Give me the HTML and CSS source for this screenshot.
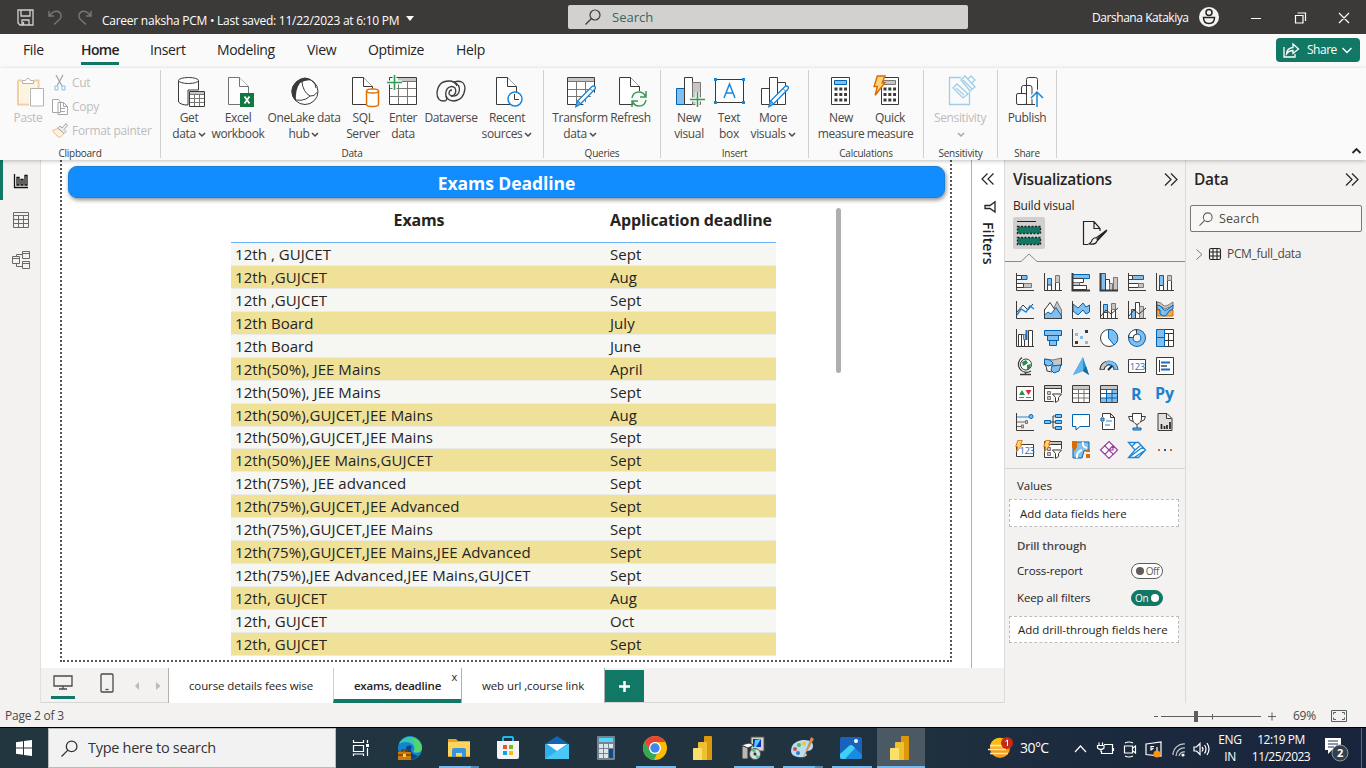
FILE: index.html
```html
<!DOCTYPE html>
<html lang="en">
<head>
<meta charset="utf-8">
<title>Career naksha PCM</title>
<link rel="stylesheet" href="styles.css">
</head>
<body>
<svg class="defs" width="0" height="0">
  <symbol id="doc" viewBox="0 0 32 32"><path class="w k" d="M6.500 1.500H17.500L26.500 10.500V28.500H6.500Z"/><path class="w k" d="M17.500 1.500V10.500H26.500"/></symbol>
  <symbol id="pencil" viewBox="0 0 32 32"><path d="M12 30.500L13.500 25L28 10.500q1.500-1.200 2.800 0q1.200 1.300 0 2.800L16.500 28Z" fill="#fff" stroke="#1a86d9" stroke-width="1.400"/><path d="M12 30.500L13.500 25q2.500.5 3 3Z" fill="#6aa9de" stroke="#1a86d9"/><path d="M26 12.500l3 3" stroke="#1a86d9"/></symbol>
  <symbol id="chev" viewBox="0 0 8 6"><path d="M1 1l3 3 3-3" fill="none" stroke="currentColor" stroke-width="1.500"/></symbol>
  <symbol id="search" viewBox="0 0 16 16"><circle cx="10" cy="6" r="5" fill="none" stroke="currentColor" stroke-width="1.200"/><path d="M6.500 9.500L.5 15.500" stroke="currentColor" stroke-width="1.200"/></symbol>
  <symbol id="pbi" viewBox="0 0 24 24"><path d="M12 1q0-1 1-1h6q1 0 1 1v23h-8z" fill="#dc980b"/><path d="M6 7q0-1 1-1h7q1 0 1 1v17H6z" fill="#efc132"/><path d="M1 13q0-1 1-1h7q1 0 1 1v11H1z" fill="#fae06a"/></symbol>
  <symbol id="funnel" viewBox="0 0 18 18"><path class="k w" d="M.5 .5H17.500V16.500H.5Z"/><path class="gf" d="M1 1H17V3H1Z"/><path class="k" d="M.5 3.500H17.500"/><path class="g" d="M3.500 6.500h3v3h-3zM3.500 11.500h3v3h-3z"/><path d="M8 8H18V18H10Z" fill="#f3f2f1"/><path class="k w" d="M8.500 9H17.500L14.500 12.500V15.500L11.500 17.500V12.500Z"/></symbol>
  <symbol id="bolt" viewBox="0 0 12 20"><path d="M4 .7h7L8.500 7H11L2 18.500 4 10.500H1Z" fill="#ffd37c" stroke="#d96b00" stroke-width="1.300"/></symbol>
</svg>

<header class="titlebar">
  <div class="quick">
    <svg width="17" height="17" viewBox="0 0 17 17" fill="none" stroke="#d2d0ce" stroke-width="1.300"><path d="M1 1H16V16H3L1 14ZM4 1V7H13V1M5 16V11H12V16M6.500 13V16"/></svg>
    <svg width="15" height="17" viewBox="0 0 15 17" fill="none" stroke="#797775" stroke-width="1.400"><path d="M1 2V7H6M1.500 6.500Q6 1 10 2.500Q15 5 12 10L6 15.500"/></svg>
    <svg width="15" height="17" viewBox="0 0 15 17" fill="none" stroke="#797775" stroke-width="1.400"><path d="M14 2V7H9M13.500 6.500Q9 1 5 2.500Q0 5 3 10L9 15.500"/></svg>
  </div>
  <div class="doc-title">Career naksha PCM • Last saved: 11/22/2023 at 6:10 PM</div>
  <i class="tri"></i>
  <div class="top-search"><svg width="16" height="16"><use href="#search"/></svg><span>Search</span></div>
  <div class="user">Darshana Katakiya</div>
  <svg class="avatar" width="20" height="20" viewBox="0 0 20 20"><circle cx="10" cy="10" r="10" fill="#f3f2f1"/><circle cx="10" cy="5.500" r="3" fill="none" stroke="#252423" stroke-width="1.500"/><path d="M4.500 10.500h11q0 6-5.500 6t-5.500-6Z" fill="none" stroke="#252423" stroke-width="1.500"/></svg>
  <svg class="winctl" width="100" height="12" viewBox="0 0 100 12" fill="none" stroke="#fff" stroke-width="1.200"><path d="M0 6.500H10M44.500 3.500H52V11H44.500ZM46.500 1H54.500V9M88 1L98 11M98 1L88 11"/></svg>
</header>

<nav class="menu">
  <a class="m1">File</a><a class="m2 on">Home</a><a class="m3">Insert</a><a class="m4">Modeling</a><a class="m5">View</a><a class="m6">Optimize</a><a class="m7">Help</a>
  <button class="share"><svg width="17" height="15" viewBox="0 0 17 15" fill="none" stroke="#fff" stroke-width="1.300"><path d="M1 4V14H12V11M3.500 11Q4 5 10 4.500V1L15.500 6 10 10.500V7.500Q6 7.500 3.500 11Z"/></svg><span>Share</span><svg width="10" height="7" viewBox="0 0 10 7"><path d="M.5 1L5 5.500 9.500 1" fill="none" stroke="#fff" stroke-width="1.300"/></svg></button>
</nav>

<section class="ribbon">
  <div class="group g-clip">
    <div class="cmds off">
      <div class="cmd c-paste"><svg width="32" height="32" viewBox="0 0 32 32" fill="none"><path d="M6 4.500H10M22 4.500H26.500V12M6 4.500V28.500H17" stroke="#f0cfa0" stroke-width="2"/><path d="M8 6H24V12H17V27H8Z" fill="#fdf3e1"/><path d="M10.500 7.500V4.500H13.500Q16 0 18.500 4.500H21.500V7.500Z" fill="#fff" stroke="#b5b3b1"/><path d="M18.500 12.500H31.500V30H18.500Z" fill="#fff" stroke="#b5b3b1"/></svg><span>Paste</span></div>
      <div class="clip-list">
        <div><svg width="16" height="16" viewBox="0 0 16 16" fill="none"><path d="M4 0L10 11M11 0L5 11" stroke="#a8a6a4" stroke-width="1.300"/><path d="M3 11h3v4h-3zM10 11h3v4h-3z" stroke="#8bbfe5"/></svg>Cut</div>
        <div><svg width="16" height="16" viewBox="0 0 16 16" fill="#fff" stroke="#a8a6a4"><path d="M.5 .5H6.500L8.500 3V13.500H.500ZM6 3.500H11.500L15.500 7.500V15.500H6ZM11.500 3.500V7.500H15.500M8.500 9.500H13M8.500 12.500H13"/></svg>Copy</div>
        <div><svg width="16" height="16" viewBox="0 0 16 16"><path d="M.5 7.500L6 5.500 12 10.500 8 14.500 5 13Z" fill="#fff0dd" stroke="#efbd93"/><path d="M6 5L8 3 10 5 14 .5 15.500 2.500 12 6.500 14 8.500 12 10.500Z" fill="#eee" stroke="#a8a6a4"/></svg>Format painter</div>
      </div>
    </div>
    <div class="glabel">Clipboard</div>
  </div>
  <div class="group g-data">
    <div class="cmds">
      <div class="cmd w42"><svg width="32" height="32" viewBox="0 0 32 32"><path class="k w" d="M5.500 4.500V26Q8 29 15 29V14H25.500V4.500"/><ellipse class="k w" cx="15.500" cy="4.500" rx="10" ry="3"/><path class="k w" d="M16.500 15.500H31.500V30.500H16.500Z"/><path class="gf" d="M17 16H31V18.500H17Z"/><path class="thin" d="M17 18.500H31M17 22.500H31M17 26.500H31M21.500 19V30M26.500 19V30"/></svg><span>Get</span><span>data<svg class="cv"><use href="#chev"/></svg></span></div>
      <div class="cmd w56"><svg width="32" height="32" viewBox="0 0 32 32"><use href="#doc" opacity=".7"/><rect x="18" y="17" width="14" height="14" fill="#10793f"/><path d="M22.500 20.500L27.500 27.500M27.500 20.500L22.500 27.500" stroke="#fff" stroke-width="1.800"/></svg><span>Excel</span><span>workbook</span></div>
      <div class="cmd w76"><svg width="32" height="32" viewBox="0 0 32 32"><circle class="k w" cx="17" cy="15.500" r="13"/><path d="M9 5Q17-2 25 5Q19 3 12 7Q7 14 8 25Q3 21 3.500 14Q4 10 9 5Z" fill="#3b3a39"/><path class="k" d="M14 6Q15 16 22 20Q26 21 29.500 16M7 24Q14 25 18 23Q21 21 22 20M24 5Q28 8 28 12"/></svg><span>OneLake data</span><span>hub<svg class="cv"><use href="#chev"/></svg></span></div>
      <div class="cmd w42"><svg width="32" height="32" viewBox="0 0 32 32"><use href="#doc" x="-1" width="32" height="32"/><path d="M19.500 15V28.500Q19.500 30.500 25.500 30.500T31.500 28.500V15" fill="#fff" stroke="#e07000" stroke-width="1.500"/><ellipse cx="25.500" cy="15" rx="6" ry="2" fill="#fff" stroke="#e07000" stroke-width="1.500"/></svg><span>SQL</span><span>Server</span></div>
      <div class="cmd w38"><svg width="32" height="32" viewBox="0 0 32 32"><path class="k w" d="M2.500 1.500H29.500V28.500H2.500Z"/><path class="gf" d="M11 2H29V5H11Z"/><path class="thin" d="M3 12.500H29M3 20.500H29M11.500 6V28M20.500 6V28M9 5.500H29"/><path d="M0 6.500H15M7.500 -1V14" stroke="#fafafa" stroke-width="4"/><path d="M0 6.500H15M7.500 -1V14" stroke="#2da04e" stroke-width="1.600"/></svg><span>Enter</span><span>data</span></div>
      <div class="cmd w58"><svg width="32" height="32" viewBox="0 0 32 32" fill="none" stroke="#3b3a39" stroke-width="1.300"><path d="M9 25Q2 25 2 17Q3 5 14 5Q20 5 22 10M9 25Q13 25 11 20Q10 15 13 12Q17 9 20 12Q22 16 19 19Q16 21 14 18Q14 14 17 14"/><path d="M19 6Q29 3 30 12Q29 24 19 25Q13 25 11 20M19 6Q26 9 24 16Q22 21 16 20"/></svg><span>Dataverse</span></div>
      <div class="cmd w54"><svg width="32" height="32" viewBox="0 0 32 32"><use href="#doc" x="-1" width="32" height="32"/><circle cx="24" cy="23" r="7" fill="#fff" stroke="#1a86d9" stroke-width="1.500"/><path class="k" d="M23.500 18V23.500H28"/></svg><span>Recent</span><span>sources<svg class="cv"><use href="#chev"/></svg></span></div>
    </div>
    <div class="glabel">Data</div>
  </div>
  <div class="group g-q">
    <div class="cmds">
      <div class="cmd w56"><svg width="32" height="32" viewBox="0 0 32 32"><path class="k w" d="M3.500 1.500H30.500V28.500H3.500Z"/><path class="gf" d="M4 2H30V5H4Z"/><path class="thin" d="M4 5.500H30M4 13.500H30M4 20.500H30M12.500 6V28M21.500 6V28"/><path d="M17 31L33 14V31Z" fill="#fafafa"/><use href="#pencil" width="32" height="32"/></svg><span>Transform</span><span>data<svg class="cv"><use href="#chev"/></svg></span></div>
      <div class="cmd w45"><svg width="32" height="32" viewBox="0 0 32 32"><use href="#doc" x="-2" width="32" height="32"/><circle cx="24" cy="23" r="8" fill="#fafafa"/><path d="M17 22Q18 16 24 16Q29 16 30.500 21M31 15V21H25M31 24Q30 30 24 30Q19 30 17.500 25M17 31V25H23" fill="none" stroke="#399b56" stroke-width="1.500"/></svg><span>Refresh</span></div>
    </div>
    <div class="glabel">Queries</div>
  </div>
  <div class="group g-ins">
    <div class="cmds">
      <div class="cmd w40"><svg width="32" height="32" viewBox="0 0 32 32"><path class="b" d="M3.500 12.500H11.500V28.500H3.500Z"/><path class="k w" d="M11.500 1.500H19.500V28.500H11.500Z"/><path class="g" d="M19.500 6.500H27.500V28.500H19.500Z"/><path d="M16 23.500H32M24.500 16V31" stroke="#fafafa" stroke-width="4"/><path d="M17 23.500H32M24.500 16V31" stroke="#2da04e" stroke-width="1.500"/></svg><span>New</span><span>visual</span></div>
      <div class="cmd w40"><svg width="32" height="32" viewBox="0 0 32 32"><path class="k w" d="M2.500 3.500H30.500V26.500H2.500Z"/><path d="M1 2h3v3h-3zM29 2h3v3h-3zM1 25h3v3h-3zM29 25h3v3h-3z" fill="#1a86d9"/><path d="M11 22L16.500 8 22 22M13 17H20" fill="none" stroke="#1a86d9" stroke-width="1.500"/></svg><span>Text</span><span>box</span></div>
      <div class="cmd w48"><svg width="32" height="32" viewBox="0 0 32 32"><path class="k w" d="M4.500 12.500H12.500V28.500H4.500ZM12.500 1.500H20.500V28.500H12.500ZM20.500 6.500H28.500V28.500H20.500Z"/><use href="#pencil" width="32" height="32"/></svg><span>More</span><span>visuals<svg class="cv"><use href="#chev"/></svg></span></div>
    </div>
    <div class="glabel">Insert</div>
  </div>
  <div class="group g-calc">
    <div class="cmds">
      <div class="cmd w48"><svg width="32" height="32" viewBox="0 0 32 32"><path class="k w" d="M6.500 1.500H24.500V28.500H6.500Z"/><path class="b" d="M9.500 4.500H21.500V8.500H9.500Z"/><path d="M9.500 13H22M9.500 18.500H22M9.500 24H22" stroke="#3b3a39" stroke-width="3" stroke-dasharray="3 1.800"/></svg><span>New</span><span>measure</span></div>
      <div class="cmd w50"><svg width="32" height="32" viewBox="0 0 32 32"><path class="k w" d="M7.500 1.500H24.500V28.500H7.500Z"/><path class="g" d="M9.500 4.500H21.500V8.500H9.500Z"/><path d="M9.500 13H22M9.500 18.500H22M9.500 24H22" stroke="#3b3a39" stroke-width="3" stroke-dasharray="3 1.800"/><use href="#bolt" x="-1" y="-1" width="13" height="22"/></svg><span>Quick</span><span>measure</span></div>
    </div>
    <div class="glabel">Calculations</div>
  </div>
  <div class="group g-sens">
    <div class="cmds off">
      <div class="cmd w54"><svg width="32" height="32" viewBox="0 0 32 32" fill="none" stroke="#9fcdea" stroke-width="1.300"><path d="M17 1.500H5.500V28.500H25.500V16"/><path d="M9 12L13 8 24 18 19 22ZM12 12L20 19M17 4L21 0 31 11 26 15ZM19 4L28 13M24 3L27 0 31 4 28 7"/></svg><span>Sensitivity</span><span><svg class="cv"><use href="#chev"/></svg></span></div>
    </div>
    <div class="glabel">Sensitivity</div>
  </div>
  <div class="group g-share">
    <div class="cmds">
      <div class="cmd w54"><svg width="32" height="32" viewBox="0 0 32 32"><path class="k w" d="M15.500 28.500V3.500Q15.500 1.500 17.500 1.500H24.500Q26.500 1.500 26.500 3.500V28.500ZM10.500 28.500V12Q10.500 9.500 12.500 9.500H19Q21 9.500 21 12V28.500Z"/><rect class="k w" x="5.500" y="17.500" width="10" height="11" rx="1.500"/><path d="M20 22L26 16 32 22M26 16V31" fill="none" stroke="#fafafa" stroke-width="4"/><path d="M20 22L26 16 32 22M26 16V31" fill="none" stroke="#1a86d9" stroke-width="1.500"/></svg><span>Publish</span></div>
    </div>
    <div class="glabel">Share</div>
  </div>
  <svg class="collapse" width="9" height="6" viewBox="0 0 9 6"><path d="M.5 5L4.500 1 8.500 5" fill="none" stroke="#252423" stroke-width="1.800"/></svg>
</section>

<main>
  <aside class="rail">
    <div class="rail-item sel"><svg width="16" height="16" viewBox="0 0 16 16" fill="none" stroke="#111" stroke-width="1.300"><path d="M1.500 1V14.500H15M4 4.500H6V12H4ZM8 6.500H10V12H8ZM12 2.500H14V12H12Z"/></svg></div>
    <div class="rail-item"><svg width="16" height="16" viewBox="0 0 16 16" fill="none" stroke="#6b6967"><path d="M.5 .5H15.500V15.500H.500ZM.5 3.500H15.500M.5 7.500H15.500M.5 11.500H15.500M5.500 3.500V15M10.500 3.500V15"/></svg></div>
    <div class="rail-item"><svg width="18" height="18" viewBox="0 0 18 18" fill="none" stroke="#6b6967"><path d="M.5 5.500H7.500V12.500H.500ZM.5 7.500H7.500M10.500 .5H17.500V7.500H10.500ZM10.500 2.500H17.500M10.500 10.500H17.500V17.500H10.500ZM10.500 12.500H17.500M4.500 5.500V3.500H10.500M4.500 12.500V15.500H10.500"/></svg></div>
  </aside>
  <section class="work">
    <div class="canvas-row">
      <div class="canvas">
        <div class="page">
          <h1>Exams Deadline</h1>
          <div class="table-wrap">
            <table>
              <thead><tr><th class="c1">Exams</th><th>Application deadline</th></tr></thead>
              <tbody>
                <tr><td>12th , GUJCET</td><td>Sept</td></tr>
                <tr><td>12th ,GUJCET</td><td>Aug</td></tr>
                <tr><td>12th ,GUJCET</td><td>Sept</td></tr>
                <tr><td>12th Board</td><td>July</td></tr>
                <tr><td>12th Board</td><td>June</td></tr>
                <tr><td>12th(50%), JEE Mains</td><td>April</td></tr>
                <tr><td>12th(50%), JEE Mains</td><td>Sept</td></tr>
                <tr><td>12th(50%),GUJCET,JEE Mains</td><td>Aug</td></tr>
                <tr><td>12th(50%),GUJCET,JEE Mains</td><td>Sept</td></tr>
                <tr><td>12th(50%),JEE Mains,GUJCET</td><td>Sept</td></tr>
                <tr><td>12th(75%), JEE advanced</td><td>Sept</td></tr>
                <tr><td>12th(75%),GUJCET,JEE Advanced</td><td>Sept</td></tr>
                <tr><td>12th(75%),GUJCET,JEE Mains</td><td>Sept</td></tr>
                <tr><td>12th(75%),GUJCET,JEE Mains,JEE Advanced</td><td>Sept</td></tr>
                <tr><td>12th(75%),JEE Advanced,JEE Mains,GUJCET</td><td>Sept</td></tr>
                <tr><td>12th, GUJCET</td><td>Aug</td></tr>
                <tr><td>12th, GUJCET</td><td>Oct</td></tr>
                <tr><td>12th, GUJCET</td><td>Sept</td></tr>
              </tbody>
            </table>
            <div class="scroll"></div>
          </div>
        </div>
      </div>
      <aside class="filters">
        <svg width="14" height="12" viewBox="0 0 14 12" fill="none" stroke="#252423" stroke-width="1.200"><path d="M6.500 .5L1 6l5.500 5.500M12.500 .5L7 6l5.500 5.500"/></svg>
        <svg class="fun" width="12" height="12" viewBox="0 0 12 12" fill="none" stroke="#252423" stroke-width="1.300"><path d="M11 .8V11L6 7.500H1V4.500H6Z"/></svg>
        <span>Filters</span>
      </aside>
    </div>
    <div class="tabs">
      <div class="views">
        <div class="view on"><svg width="20" height="15" viewBox="0 0 20 15" fill="none" stroke="#4b4947" stroke-width="1.300"><path d="M1 1H19V11H1ZM10 11V14M6 14H14"/></svg></div>
        <div class="view ph"><svg width="14" height="20" viewBox="0 0 14 20" fill="none" stroke="#4b4947" stroke-width="1.300"><rect x="1" y="1" width="12" height="18" rx="1"/><path d="M5.500 16.500H8.500"/></svg></div>
        <svg class="arrows" width="28" height="8" viewBox="0 0 28 8" fill="#bdbbb9"><path d="M5 0V8L1 4ZM22 0V8L26.500 4Z"/></svg>
      </div>
      <div class="tab t1">course details fees wise</div>
      <div class="tab t2">exams, deadline<i>x</i></div>
      <div class="tab t3">web url ,course link</div>
      <div class="add"><svg width="11" height="11" viewBox="0 0 11 11"><path d="M0 5.500H11M5.500 0V11" stroke="#fff" stroke-width="2.500"/></svg></div>
    </div>
  </section>

  <aside class="viz">
    <div class="phead"><h2>Visualizations</h2><svg width="14" height="13" viewBox="0 0 14 13" fill="none" stroke="#252423" stroke-width="1.200"><path d="M1 .5L7 6.500 1 12.500M7 .5L13 6.500 7 12.500"/></svg></div>
    <div class="bv">Build visual</div>
    <div class="modes">
      <div class="mode on"><svg width="26" height="26" viewBox="0 0 26 26"><path d="M1 1.500H20" stroke="#252423"/><path d="M1.500 6.500H24.500V13.500H1.500ZM1.500 17.500H24.500V24.500H1.500Z" fill="#117865" stroke="#252423" stroke-dasharray="2 1.500" stroke-width="1.400"/></svg></div>
      <svg class="brush" width="26" height="26" viewBox="0 0 26 26" fill="none" stroke="#252423" stroke-width="1.200"><path d="M6 24.500H1.500V1.500H12L18 8.500V11M12 1.500V8.500H18M25 10L15 21Q14 25 7 24Q10 22 10 20Q12 17 14 18L25 10Z"/><path d="M24 11L15 20" stroke-width="2"/></svg>
    </div>
    <svg class="notch" width="180" height="9" viewBox="0 0 180 9"><path d="M0 8.500H16L24 1 32 8.500H180" fill="none" stroke="#8a8886"/></svg>
    <div class="icons">
      <svg viewBox="0 0 18 18"><path class="b" d="M5 2.500h6v4H5z"/><path class="k w" d="M.5 2.500h5v4h-5z"/><path class="g" d="M7.500 10.500H15.500V14.500H7.500Z"/><path class="k w" d="M.5 10.500h7v4h-7z"/><path class="k" d="M.5 0V17.500H18"/></svg>
      <svg viewBox="0 0 18 18"><path class="b" d="M3.500 5.500h4v7h-4z"/><path class="k w" d="M3.500 12h4v5.500h-4zM11.500 9.500h4v8h-4z"/><path class="g" d="M11.500 2.500h4v7h-4z"/><path class="k" d="M.5 0V17.500H18"/></svg>
      <svg viewBox="0 0 18 18"><path class="b" d="M.5 1.500h17v4H.5z"/><path class="k w" d="M.5 5.500h11v4H.5z"/><path class="g" d="M.5 9.500h7v3H.5z"/><path class="k w" d="M.5 12.500h14v4H.5z"/><path class="k" stroke-width="2" d="M.5 0V17.500H18"/></svg>
      <svg viewBox="0 0 18 18"><path class="b" d="M.5 .5h5v17h-5z"/><path class="k w" d="M5.500 6.500h4v11h-4z"/><path class="g" d="M9.500 10.500h3v7h-3zM13.500 4.500h4v13h-4z"/><path class="k" stroke-width="2" d="M.5 0V17.500H18"/></svg>
      <svg viewBox="0 0 18 18"><path class="b" d="M4.500 2.500h11v4h-11z"/><path class="k w" d="M.5 2.500h4v4h-4zM.5 10.500h10v4h-10z"/><path class="g" d="M10.500 10.500h5v4h-5z"/><path class="k" d="M.5 0V17.500H18"/></svg>
      <svg viewBox="0 0 18 18"><path class="b" d="M3.500 2.500h4v10h-4z"/><path class="k w" d="M3.500 12.500h4v5h-4zM11.500 7.500h4v10h-4z"/><path class="g" d="M11.500 2.500h4v5h-4z"/><path class="k" d="M.5 0V17.500H18"/></svg>

      <svg viewBox="0 0 18 18"><path class="k" d="M.5 0V17.500H18M1 11L7 4 12 9 17 3"/><path d="M1 14L5 8 10 11 14 5 18 8" fill="none" stroke="#1a86d9" stroke-width="1.400"/></svg>
      <svg viewBox="0 0 18 18"><path class="g" d="M9 9L13 .5 17.500 9V17H9Z"/><path class="k w" d="M.5 17V9L6 1.500 13 12"/><path class="b" d="M.5 17.500V14L4 11 7 13 12 6.500 17.500 15V17.500Z"/><path class="k" d="M.5 8V17.500H18"/></svg>
      <svg viewBox="0 0 18 18"><path class="b" d="M1 3L6 7 11 2 14 6 17.500 4V11L14 13 11 9 6 14 1 10Z"/><path class="k" d="M.5 0V17.500H18"/></svg>
      <svg viewBox="0 0 18 18"><path class="b" d="M3.500 3.500h4v10h-4z"/><path class="k w" d="M3.500 11.500h4v6h-4zM11.500 8.500h4v9h-4z"/><path class="g" d="M11.500 2.500h4v6h-4z"/><path class="k" d="M.5 0V17.500H18M1 15L6 9 11 13 18 7"/></svg>
      <svg viewBox="0 0 18 18"><path class="b" d="M3.500 8.500h4v9h-4z"/><path class="k w" d="M7.500 1.500h4v16h-4z"/><path class="g" d="M11.500 5.500h4v12h-4z"/><path class="k" d="M.5 0V17.500H18M1 15L6 9 11 13 18 7"/></svg>
      <svg viewBox="0 0 18 18"><path class="g" d="M1 1Q5 1 7 4T17 1V5Q13 6 9 8Q5 5 1 5Z"/><path d="M1 9h4l3 4 4-4h5v6H1z" fill="#f2a451" stroke="#e07000"/><path class="b" d="M1 4Q5 4 7 8T17 4V8Q13 9 11 13T4 13V9L1 8Z"/><path class="k" d="M.5 0V17.500H18"/></svg>

      <svg viewBox="0 0 18 18"><path class="k w" d="M2.500 5.500h3v12h-3zM5.500 5.500h3v12h-3zM12.500 1.500h4v16h-4z"/><path class="g" d="M7.500 5.500h2v5h-2z"/><path d="M10.500 1v10" stroke="#1a6fc0" stroke-width="2"/><path class="k" d="M.5 0V17.500H18"/></svg>
      <svg viewBox="0 0 18 18"><path class="b" d="M.5 1.500h17v5H.5zM3.500 6.500h11v5h-11zM5.500 11.500h7v5h-7z"/></svg>
      <svg viewBox="0 0 18 18"><path class="k" d="M.5 0V17.500H18"/><path d="M13 1h3v3h-3zM3 12h3v3H3z" fill="#3b3a39"/><path d="M3 4h3v3H3zM8 7h3v3H8zM13 12h3v3h-3z" fill="#83beec"/></svg>
      <svg viewBox="0 0 18 18"><circle class="k w" cx="9" cy="9" r="8.500"/><path class="b" d="M8.500 .5A8.500 8.500 0 0 1 14 16L8.500 9Z"/></svg>
      <svg viewBox="0 0 18 18"><circle cx="9" cy="9" r="6.200" fill="none" stroke="#0063b1" stroke-width="5.600"/><circle cx="9" cy="9" r="6.200" fill="none" stroke="#83beec" stroke-width="3.600"/><path d="M2.800 9A6.200 6.200 0 0 1 9 2.800" fill="none" stroke="#3b3a39" stroke-width="5.600"/><path d="M2.900 8A6.200 6.200 0 0 1 8 2.900" fill="none" stroke="#fff" stroke-width="3.600"/></svg>
      <svg viewBox="0 0 18 18"><path class="k w" d="M8.500 .5h9v17h-9zM8.500 4.500h9M12.500 5v12M8.500 11.500h9"/><path class="b" d="M.5 .5h8v8h-8zM.5 8.500h8v9h-8z"/></svg>

      <svg viewBox="0 0 18 18"><circle class="k w" cx="10" cy="7.500" r="5.500"/><path d="M6 5l4-2 2 3-3 2-2 1zM11 8l4-1-1 4-3 2z" fill="#2b8d48"/><path class="k" stroke-width="1.300" d="M6 .5A8 8 0 1 0 15 14M9.500 15V17.500M4 17.500H15"/></svg>
      <svg viewBox="0 0 18 18"><path class="g" d="M.5 2L9 3 17.500 1V8L12 10 9 8 1 8Z"/><path class="b" d="M.5 2L6 3 9 6 8 8 4 9 .5 7ZM8 9L17 8 15 14 10 16 7 13Z"/><path class="k" d="M.5 7Q3 10 3 14L8 15M17.500 1V8L16 9"/></svg>
      <svg viewBox="0 0 18 18"><path d="M11 0L17 18 11 14 1 18Z" fill="#2490d7"/><path d="M11 0V14L1 18Z" fill="#64b5e9"/><path d="M11 14L17 18 14 9Z" fill="#156b9f"/></svg>
      <svg viewBox="0 0 18 18"><path d="M2 13A7 7 0 0 1 16 13" fill="none" stroke="#0063b1" stroke-width="5"/><path d="M2 12.500A7 7 0 0 1 16 12.500" fill="none" stroke="#83beec" stroke-width="3"/><path d="M2 12.500A7 7 0 0 1 6.500 6.500" fill="none" stroke="#3b3a39" stroke-width="5"/><path d="M2 12A7 7 0 0 1 6.500 6.500" fill="none" stroke="#c8c6c4" stroke-width="3"/><path d="M8 13l4-4" stroke="#252423" stroke-width="2"/></svg>
      <svg viewBox="0 0 18 18"><path class="k w" d="M.5 2.500h17v13H.5z"/><text x="1.800" y="12.700" class="num">123</text></svg>
      <svg viewBox="0 0 18 18"><path class="k w" d="M.5 .5h17v17H.5z"/><path d="M3.500 3v12" class="k"/><path d="M5 5.500h9M5 12.500h9" stroke="#1a6fc0" stroke-width="2"/><path d="M5 9h6" stroke="#444" stroke-width="1.500"/></svg>

      <svg viewBox="0 0 18 18"><path class="k w" d="M.5 1.500h17v14H.5z"/><path d="M3 10l3-5 3 5z" fill="#2b9348"/><path d="M9.500 5h6l-3 5z" fill="#d13438"/><path d="M3 12.500h5M10 12.500h5" stroke="#777"/></svg>
      <svg viewBox="0 0 18 18"><use href="#funnel"/></svg>
      <svg viewBox="0 0 18 18"><path class="k w" d="M.5 .5h17v17H.5z"/><path class="gf" d="M1 1H17V4H1Z"/><path class="thin" d="M1 4.500H17M1 8.500H17M1 13H17M6.500 5V17M12 5V17"/></svg>
      <svg viewBox="0 0 18 18"><path class="k w" d="M.5 .5h17v17H.5z"/><path class="gf" d="M1 1H17V4H1Z"/><path d="M12 5h5v12H1v-4h11zM6 9h6v4H6z" fill="#83beec"/><path d="M1 4.500H17M1 8.500H17M1 13H17M6.500 5V17M12 5V17" stroke="#0063b1"/></svg>
      <svg viewBox="0 0 18 18"><text x="3" y="15" class="rr">R</text></svg>
      <svg viewBox="0 0 18 18"><text x="-1" y="14" class="rr">Py</text></svg>

      <svg viewBox="0 0 18 18"><path class="k" d="M.5 0V17.500H18"/><path d="M1 9h8M1 13.500h4" stroke="#666"/><path d="M1 4h12" stroke="#1a86d9"/><circle cx="15" cy="3.500" r="2" class="b"/><path class="g" d="M9.500 7.500h2v3h-2zM5.500 12h2v3h-2z"/></svg>
      <svg viewBox="0 0 18 18"><path class="k" d="M6 9h6M9 9V3h3M9 9v6h3"/><path class="b" d="M.5 7.500h6v3h-6zM11.500 1.500h6v3h-6zM11.500 7.500h6v3h-6zM11.500 13.500h6v3h-6z"/></svg>
      <svg viewBox="0 0 18 18"><path d="M.5 1.500h17v12H8L4 17V13.500H.5z" fill="#fff" stroke="#0063b1"/></svg>
      <svg viewBox="0 0 18 18"><path class="k w" d="M2.500 4V.5h8l4 4V16.500H2.500V9M10.500 .5v4h4"/><path class="b" d="M1 5h3v3H1z"/><path d="M6 8h6M5 12h5" stroke="#1a86d9"/></svg>
      <svg viewBox="0 0 18 18"><path class="k w" d="M4.500 .5h9V5q0 5-4.500 6.500Q4.500 10 4.500 5zM4.500 3.500H.5Q1 8 5 8.500M13.500 3.500h4Q17 8 13 8.500M9 12v3"/><path class="b" d="M5 15h8v2H5z"/></svg>
      <svg viewBox="0 0 18 18"><path stroke="#3b3a39" fill="#e1dfdd" d="M2 .5h9l5 5V17.500H2zM10.500 .5v5h5"/><path d="M5.500 11v5M8.500 13v3M11 12v4M14 9v7" stroke="#252423" stroke-width="1.700"/></svg>

      <svg viewBox="0 0 18 18"><path class="k w" d="M.5 3.500h17v12H.5z"/><text x="3.500" y="13" class="num">123</text><use href="#bolt" x="-1" y="-1" width="8" height="13"/></svg>
      <svg viewBox="0 0 18 18"><use href="#funnel"/><use href="#bolt" x="-1" y="-1" width="8" height="13"/></svg>
      <svg viewBox="0 0 18 18"><path class="b" d="M1 1H17V9L12 10 10 17H1Z"/><path d="M11 1q-1 5 4 6M5 17q-1-6 5-8" fill="none" stroke="#fff" stroke-width="2"/><path d="M0 0h5v6l-2.500 4L0 6zM14 13h4v4h-4zM14 9h4v2h-4z" fill="#d96b00"/></svg>
      <svg viewBox="0 0 18 18" fill="#fff" stroke="#9b3d9f" stroke-width="1.200"><path d="M9 .5L13 4.500V9H9L4.700 4.700ZM4.700 4.700L.5 9 5 13.300 9 9ZM13 4.500L17.500 9 13.300 13.300 9 9ZM5 13.300L9 17.500 13.300 13.300 9 9Z"/></svg>
      <svg viewBox="0 0 18 18" fill="#fff" stroke="#1a86d9" stroke-width="1.300"><path d="M.5 1.500h10L17.500 9l-7 7.500H.5L7 9ZM4 5L8 1.500M7 9l6-5M2 15.500L15 6M7 16L16 10"/></svg>
      <svg viewBox="0 0 18 18"><path d="M2 8h2v2H2z" fill="#d96b00"/><path d="M8 8h2v2H8z" fill="#2b579a"/><path d="M14 8h2v2h-2z" fill="#d96b00"/></svg>
    </div>
    <div class="fields">
      <div class="lbl">Values</div>
      <div class="drop">Add data fields here</div>
      <div class="lbl bold">Drill through</div>
      <div class="row"><span>Cross-report</span><div class="tog"><b></b><span>Off</span></div></div>
      <div class="row r2"><span>Keep all filters</span><div class="tog on"><span>On</span><b></b></div></div>
      <div class="drop d2">Add drill-through fields here</div>
    </div>
  </aside>

  <aside class="data">
    <div class="phead"><h2>Data</h2><svg width="14" height="13" viewBox="0 0 14 13" fill="none" stroke="#252423" stroke-width="1.200"><path d="M1 .5L7 6.500 1 12.500M7 .5L13 6.500 7 12.500"/></svg></div>
    <div class="dsearch"><svg width="14" height="14"><use href="#search"/></svg><span>Search</span></div>
    <div class="tree"><svg width="7" height="11" viewBox="0 0 7 11" fill="none" stroke="#797775"><path d="M.5 .5L6 5.500 .5 10.500"/></svg><svg class="tb" width="12" height="12" viewBox="0 0 12 12" fill="none" stroke="#252423" stroke-width="1.100"><rect x=".5" y=".5" width="11" height="11" rx="1.500"/><path d="M.5 4H11.500M.5 8H11.500M4 .5V11.500M8 .5V11.500"/></svg><span>PCM_full_data</span></div>
  </aside>
</main>

<footer class="status">
  <span>Page 2 of 3</span>
  <div class="zoom"><svg width="122" height="12" viewBox="0 0 122 12"><path d="M0 6.500H4M7 6.500H107M58.500 4V9.500M114 6.500H122M118 2.500V10.500" stroke="#605e5c"/><path d="M40 1H44V12H40Z" fill="#605e5c"/></svg><span>69%</span><svg width="16" height="12" viewBox="0 0 16 12" fill="none" stroke="#4b6b55"><path d="M.5 .5H15.500V11.500H.5Z" stroke="#605e5c"/><path d="M2.500 4.500V2.500H5M11 2.500H13.500V4.500M13.500 7.500V9.500H11M5 9.500H2.500V7.500"/></svg></div>
</footer>

<footer class="taskbar">
  <div class="start"><svg width="16" height="16" viewBox="0 0 16 16" fill="#fff"><path d="M0 2.200L7 1.200V7.500H0ZM8 1L16 0V7.500H8ZM0 8.500H7V14.800L0 13.800ZM8 8.500H16V16L8 15Z"/></svg></div>
  <div class="tsearch"><svg width="17" height="17"><use href="#search"/></svg><span>Type here to search</span></div>
  <div class="apps">
  <div class="app"><svg width="16" height="16" viewBox="0 0 16 16" fill="none" stroke="#fff" stroke-width="1.200"><path d="M.5 0V2.500H10.500V0M.5 5.500H10.500V11.500H.5ZM.5 16V14H10.500V16M14.500 0V3M14.500 8V16"/><path d="M13 4h3v3h-3z" fill="#fff" stroke="none"/></svg></div>
  <div class="app"><svg class="lg" viewBox="0 0 24 24"><circle cx="12" cy="12" r="12" fill="#1484cf"/><path d="M1 8A12 12 0 0 1 24 12Q23 18 15 16Q18 12 14 8Q8 4 1 8Z" fill="#36c6b4"/><path d="M13 1Q24 3 24 13Q22 18 16 16Q19 8 13 1Z" fill="#55d468"/><path d="M8 13Q8 8 14 10Q10 17 20 20Q15 25 10 23Q6 18 8 13Z" fill="#0d4488"/><path d="M0 16H13V24H0Z" fill="#cd7a09"/><path d="M4 16V14H9V16M0 19H13" fill="none" stroke="#754007" stroke-width="1.500"/><path d="M5 18h3v3H5z" fill="#ffd34a"/></svg></div>
  <div class="app run half"><svg class="lg" viewBox="0 0 24 24"><path d="M1 3H9L11 5H23V21H1Z" fill="#e7a51a"/><path d="M1 6H23V20H1Z" fill="#ffd35c"/><path d="M5 21V14Q5 12 7 12H17Q19 12 19 14V21H15V17H9V21Z" fill="#3596dd"/></svg></div>
  <div class="app"><svg class="lg" viewBox="0 0 24 24"><path d="M7 7V2Q7 1 8 1H16Q17 1 17 2V7" fill="none" stroke="#21b8e8" stroke-width="2"/><path d="M1 5H23V21Q23 23 21 23H3Q1 23 1 21Z" fill="#f2f4f7"/><path d="M7 9h4v4H7z" fill="#f35325"/><path d="M13 9h4v4h-4z" fill="#81bc06"/><path d="M7 15h4v4H7z" fill="#05a6f0"/><path d="M13 15h4v4h-4z" fill="#ffba08"/></svg></div>
  <div class="app"><svg class="lg" viewBox="0 0 24 24"><path d="M0 8L12 0 24 8V22H0Z" fill="#1266b4"/><path d="M0 8L24 8V23H0Z" fill="#2dafed"/><path d="M2 8H22L12 15Z" fill="#fff"/><path d="M0 23L12 15 24 8V23Z" fill="#49c7f5"/></svg></div>
  <div class="app"><svg class="lg" viewBox="0 0 24 24"><rect x="3" width="18" height="24" rx="1" fill="#768393"/><path d="M5 2H19V6H5Z" fill="#4fd8fa"/><path d="M5 8h4v4H5zM10 8h4v4h-4zM15 8h4v4h-4zM5 13h4v4H5zM10 13h4v4h-4zM5 18h4v4H5zM10 18h4v4h-4z" fill="#dce4ec"/><path d="M15 13h4v9h-4z" fill="#0d4a86"/></svg></div>
  <div class="app run"><svg class="lg" viewBox="0 0 24 24"><circle cx="12" cy="12" r="12" fill="#fbbc05"/><path d="M1.600 6A12 12 0 0 1 22.400 6H12A6 6 0 0 0 7 9L6.800 15Z" fill="#ea4335"/><path d="M1.600 6L7 15A6 6 0 0 0 12 18L14 17.500 11 24A12 12 0 0 1 1.600 6Z" fill="#34a853"/><circle cx="12" cy="12" r="6" fill="#fff"/><circle cx="12" cy="12" r="4.700" fill="#4285f4"/></svg></div>
  <div class="app"><svg class="lg"><use href="#pbi"/></svg></div>
  <div class="app run"><svg class="lg" viewBox="0 0 24 24"><path d="M10 1H23V15H10Z" fill="#d5d3c5" stroke="#555"/><path d="M12 3H20V11H12Z" fill="#0b2bd0"/><path d="M14 4L20 3 15 11H13Z" fill="#46d7f0"/><path d="M1 10H7V23H1Z" fill="#b8b8b8" stroke="#333"/><path d="M0 9L8 7 13 9 7 12Z" fill="#fff" stroke="#333"/><circle cx="14" cy="18" r="5.500" fill="#ddd" stroke="#555"/><path d="M14 18L10 14Q13 12 15 13ZM14 18l5 3-3 2z" fill="#55c58e"/><circle cx="14" cy="18" r="1.500" fill="#333"/></svg></div>
  <div class="app run half"><svg class="lg" viewBox="0 0 24 24"><path d="M1 15Q1 6 12 4Q24 3 23 11Q22 15 17 15Q15 17 17 19Q15 22 8 21Q1 20 1 15Z" fill="#b8dcf2"/><circle cx="5" cy="13" r="2" fill="#df4a42"/><circle cx="9" cy="9" r="2" fill="#57b84c"/><circle cx="14" cy="7.500" r="2" fill="#f5c43b"/><circle cx="8" cy="17" r="2" fill="#2f7fc7"/><path d="M12 24L18 9 21 1 24 3 20 10Z" fill="#d78b48"/></svg></div>
  <div class="app run"><svg class="lg" viewBox="0 0 24 24"><rect x="1" y="1" width="22" height="22" rx="2" fill="#1763bd"/><path d="M1 19L10 10Q12 8 14 10L23 19V21Q23 23 21 23H3Q1 23 1 21Z" fill="#1a8cdf"/><path d="M1 18L10 10Q12 8 14 10L16 12 6 23H3Q1 23 1 21Z" fill="#42cff5"/><circle cx="17" cy="5" r="2" fill="#fff"/></svg></div>
  <div class="app run act"><svg class="lg"><use href="#pbi"/></svg></div>
  </div>
  <div class="weather"><svg width="26" height="22" viewBox="0 0 26 22"><circle cx="12" cy="11" r="10" fill="#f99b16"/><path d="M3 6A10 10 0 0 1 18 3L16 11H2Z" fill="#fdba13"/><path d="M2 8.500H15M0 12.500H18M2 16.500H20" stroke="#f9e6c0" stroke-width="1.500"/><circle cx="19" cy="6" r="6" fill="#c42b1c"/><path d="M17.500 4.500L19.500 3V9" fill="none" stroke="#fff"/></svg><span>30°C</span></div>
  <svg class="tray" width="134" height="18" viewBox="0 0 134 18" fill="none" stroke="#fff" stroke-width="1.200"><path d="M0 12L5.500 6 11 12M29 4.500H37.500V13.500H26.500V11M38.500 8V11M24 2.500V5M27.500 2.500V5M22.500 5.500H29V8Q26 11 22.500 8ZM26 10V12M49.500 6H57.500V13H49.500ZM58 8L60.500 6V13L58 11M50 3Q54 1 58 3M50 16Q54 18 58 16M71 4L86 2V16L71 14.500ZM79 6.500H76V10.500M76 10L78.500 8M80 11.500H82V7"/><circle cx="82" cy="14" r="3.500" fill="#ff9500" stroke="none"/><path d="M98 15A11 11 0 0 1 110 4M101 16A8 8 0 0 1 110 8M104 16A5 5 0 0 1 110 12" stroke="#c3cad2"/><circle cx="108" cy="15" r="1" fill="#fff"/><path d="M119 7H121.500L125 3.500V14.500L121.500 11H119ZM127 7Q129 9 127 11.500M129.500 5Q132.500 9 129.500 13.500M132 3Q136 9 132 15"/></svg>
  <div class="lang">ENG<br>IN</div>
  <div class="clock">12:19 PM<br>11/25/2023</div>
  <div class="notif"><svg width="26" height="26" viewBox="0 0 26 26"><path d="M1 2H17V14H8L4 18V14H1Z" fill="#fff"/><path d="M4 5H14M4 8H14M4 11H10" stroke="#223344" stroke-width="1.200"/><circle cx="16" cy="17" r="8" fill="#373f4b" stroke="#8c96a3"/></svg><b>2</b></div>
  <div class="peek"></div>
</footer>
</body>
</html>
```
FILE: styles.css
```css
* { box-sizing: border-box; }
body { margin: 0; width: 1366px; height: 768px; overflow: hidden; display: flex; flex-direction: column; font: 12px/16px "Open Sans", "Noto Sans", sans-serif; letter-spacing: -0.03em; color: #252423; background: #f3f2f1; }
svg { display: block; flex: none; overflow: visible; }
.defs { position: absolute; }
h1, h2 { margin: 0; }
.k { stroke: #3b3a39; fill: none; }
.w { fill: #fff; }
.b { fill: #83beec; stroke: #0063b1; }
.g { fill: #c8c6c4; stroke: #7a7574; }
.gf { fill: #c8c6c4; }
.thin { stroke: #797774; fill: none; }

.titlebar { height: 34px; background: #3b3a39; color: #fff; display: flex; align-items: center; flex: none; }
.quick { display: flex; gap: 14px; padding-left: 17px; width: 102px; }
.doc-title { width: 303px; margin-top: 7px; white-space: nowrap; letter-spacing: -0.021em; }
.tri { border: 4.5px solid transparent; border-top: 5px solid #fff; border-bottom: 0; margin: 2px 0 0 1px; }
.top-search { margin-left: 154px; width: 400px; height: 24px; background: #d2d1d0; border-radius: 2px; display: flex; align-items: center; gap: 11px; padding-left: 17px; color: #33685d; font-size: 13px; letter-spacing: 0; }
.top-search svg { color: #3b3a39; }
.user { margin: 2px 0 0 124px; width: 107px; white-space: nowrap; letter-spacing: -0.037em; }
.winctl { margin: 2px 0 0 32px; }

.menu { height: 34px; background: #fafafa; flex: none; display: flex; align-items: flex-start; font-size: 14px; }
.menu a { height: 31px; padding-top: 8px; white-space: nowrap; }
.m1 { margin-left: 23px; width: 58px; }
.m2 { width: 38px; font-weight: 600; border-bottom: 3px solid #117865; letter-spacing: -0.045em; }
.m3 { margin-left: 31px; width: 67px; }
.m4 { width: 90px; }
.m5 { width: 61px; }
.m6 { width: 88px; }
.m7 { width: 60px; }
.share { margin: 4px 6px 0 auto; width: 84px; height: 24px; background: #117865; color: #fff; border: 0; border-radius: 4px; display: flex; align-items: center; padding: 0 0 0 7px; font: inherit; font-size: 12px; line-height: 18px; letter-spacing: -0.04em; }
.share span { width: 35px; margin-left: 7px; text-align: left; }

.ribbon { height: 92px; background: #fafafa; display: flex; flex: none; position: relative; z-index: 2; box-shadow: 0 1px 4px rgba(0,0,0,.25); }
.group { height: 88px; margin-top: 2px; border-right: 1px solid #d2d0ce; display: flex; flex-direction: column; flex: none; }
.cmds { height: 76px; flex: none; display: flex; padding-top: 6px; }
.cmd { flex: none; display: flex; flex-direction: column; align-items: center; text-align: center; white-space: nowrap; color: #4a4846; font-size: 12px; line-height: 16px; }
.cmd > svg { margin-bottom: 2px; }
.cmd span { display: flex; align-items: center; height: 16px; }
.cmd .cv { width: 8px; height: 6px; margin: 1px 0 0 2px; }
.off, .off .cmd { color: #bebcba; }
.off .cv { color: #a9a7a5; }
.glabel { text-align: center; font-size: 10px; line-height: 14px; color: #3b3a39; letter-spacing: -0.025em; }
.w38 { width: 38px; } .w40 { width: 40px; } .w42 { width: 42px; } .w45 { width: 45px; } .w48 { width: 48px; }
.w50 { width: 50px; } .w54 { width: 54px; } .w56 { width: 56px; } .w58 { width: 58px; } .w76 { width: 76px; }
.g-clip { width: 161px; } .g-data { width: 383px; } .g-q { width: 117px; } .g-ins { width: 148px; } .g-calc { width: 115px; } .g-sens { width: 74px; } .g-share { width: 59px; }
.g-data .cmds { padding-left: 7px; }
.g-q .cmds, .g-ins .cmds, .g-calc .cmds { padding-left: 8px; }
.g-sens .cmds { padding-left: 9px; }
.g-share .cmds { padding-left: 2px; }
.c-paste { width: 56px; }
.clip-list { margin-left: -4px; margin-top: -1px; display: flex; flex-direction: column; gap: 8px; white-space: nowrap; letter-spacing: -0.025em; }
.clip-list div { display: flex; gap: 4px; height: 16px; align-items: center; }
.collapse { margin: 80px 5px 0 auto; }

main { height: 543px; display: flex; flex: none; }
.rail { width: 41px; border-right: 1px solid #e1dfdd; flex: none; }
.rail-item { height: 40px; display: flex; align-items: center; justify-content: center; padding-left: 2px; }
.rail-item.sel { border-left: 3px solid #117865; padding: 1px 1px 0 0; }
.work { width: 963px; display: flex; flex-direction: column; }
.canvas-row { height: 508px; display: flex; background: #fff; }
.canvas { width: 930px; padding-left: 19px; }
.page { width: 892px; height: 502px; border: 2px dotted #5a5856; border-top: 0; padding: 6px 5px 0 6px; }
.page h1 { height: 32px; width: 877px; border-radius: 9px; background: #118dff; border: 1px solid #1b7fd8; box-shadow: 1px 2px 4px rgba(0,0,0,.45); color: #fff; text-align: center; font-size: 17.500px; line-height: 33px; font-weight: 700; letter-spacing: -0.004em; }
.table-wrap { display: flex; align-items: flex-start; padding: 8px 0 0 163px; }
table { width: 545px; table-layout: fixed; border-collapse: separate; border-spacing: 0; font-size: 15px; letter-spacing: 0.004em; }
th { height: 37px; padding: 0 0 8px 4px; text-align: left; font-size: 16px; white-space: nowrap; border-bottom: 1px solid #6cb4f5; letter-spacing: -0.008em; }
th.c1 { width: 375px; text-align: center; padding-left: 1px; }
td { height: 22.940px; padding: 0 0 0 4px; line-height: 20px; background: #f6f6f3; border-bottom: 1px solid #ebebe8; white-space: nowrap; }
tr:nth-child(even) td { background: #f0e199; }
.scroll { width: 5px; height: 165px; border-radius: 3px; background: #b0afae; margin: 2px 0 0 60px; }
.filters { width: 33px; border-left: 1px solid #b3b0ad; display: flex; flex-direction: column; align-items: center; padding-top: 13px; }
.filters .fun { margin: 16px 0 9px 4px; }
.filters span { writing-mode: vertical-rl; font-size: 14px; font-weight: 600; line-height: 16px; letter-spacing: 0.01em; }
.tabs { height: 35px; border-bottom: 1px solid #d8d6d4; display: flex; }
.views { width: 127px; display: flex; padding-left: 10px; }
.view { width: 24px; height: 31px; display: flex; justify-content: center; padding-top: 7px; }
.view.on { border-bottom: 3px solid #117865; }
.view.ph { margin-left: 20px; padding-top: 5px; }
.arrows { margin: 14px 0 0 15px; }
.tab { background: #fff; border-left: 1px solid #b3b0ad; height: 35px; display: flex; align-items: center; justify-content: center; font-size: 11.500px; letter-spacing: -0.008em; white-space: nowrap; position: relative; }
.t1 { width: 165px; }
.t2 { width: 128px; border-bottom: 4px solid #117865; border-left-color: #d2d0ce; padding-top: 4px; font-weight: 600; letter-spacing: -0.018em; }
.t2 i { position: absolute; right: 4px; top: 1px; font-style: normal; font-weight: 500; font-size: 11px; }
.t3 { width: 144px; border-right: 1px solid #b3b0ad; }
.add { width: 39px; height: 32px; margin-top: 2px; background: #117865; display: flex; align-items: center; justify-content: center; }

.viz { width: 182px; border: solid #dddbd9; border-width: 0 1px; }
.data { width: 180px; }
.phead { display: flex; justify-content: space-between; align-items: center; height: 38px; padding: 0 7px 0 8px; }
.phead h2 { font-size: 15.500px; font-weight: 600; letter-spacing: -0.018em; }
.bv { padding-left: 8px; line-height: 16px; font-weight: 500; letter-spacing: -0.015em; }
.modes { display: flex; padding: 3px 0 0 8px; height: 38px; }
.mode { width: 32px; height: 32px; background: #d2d0ce; border-radius: 2px; padding: 3px; }
.brush { margin: 3px 0 0 37px; }
.notch { margin-top: 1px; }
.icons { display: grid; grid-template-columns: repeat(6, 28px); grid-auto-rows: 28px; place-items: center; padding: 6px 0 0 6px; }
.icons > svg { width: 18px; height: 18px; }
.num { font: 500 9.500px "Open Sans", sans-serif; fill: #1a6fc0; letter-spacing: -0.5px; }
.rr { font: 700 16px "Open Sans", sans-serif; fill: #2080cb; letter-spacing: 0; }
.fields { border-top: 1px solid #d8d6d4; margin-top: 4px; padding: 8px 6px 0 4px; font-size: 11.500px; letter-spacing: -0.004em; }
.lbl { height: 22px; line-height: 18px; padding-left: 8px; }
.lbl.bold { font-weight: 600; color: #4a4846; margin-top: 9px; line-height: 20px; letter-spacing: -0.01em; }
.drop { height: 28px; border: 1px dashed #bebcba; background: #fff; line-height: 27px; padding-left: 10px; white-space: nowrap; }
.d2 { height: 27px; padding-left: 8px; margin-top: 5px; line-height: 25px; }
.row { display: flex; justify-content: space-between; align-items: center; height: 27px; padding: 0 16px 0 8px; margin-top: -1px; letter-spacing: -0.012em; }
.r2 { margin-top: 0; }
.tog { width: 32px; height: 16px; border: 1px solid #605e5c; border-radius: 8px; background: #fff; color: #605e5c; display: flex; align-items: center; justify-content: space-between; padding: 0 3px 0 4px; font-size: 10px; letter-spacing: -0.04em; }
.tog b { width: 8px; height: 8px; border-radius: 50%; background: #605e5c; }
.tog.on { background: #117865; border-color: #117865; color: #fff; padding: 0 3px; }
.tog.on b { background: #fff; }
.dsearch { margin: 7px 4px 0; height: 27px; border: 1px solid #797775; border-radius: 2px; background: #f8f7f6; display: flex; align-items: center; gap: 6px; padding-left: 8px; font-size: 12.500px; color: #4a4846; letter-spacing: 0.01em; line-height: 18px; }
.dsearch svg { color: #605e5c; }
.tree { display: flex; align-items: center; padding: 14px 0 0 10px; color: #4a4846; letter-spacing: -0.028em; }
.tb { margin: 0 6px 0 6px; }

.status { height: 24px; flex: none; display: flex; align-items: center; justify-content: space-between; padding: 1px 19px 0 5px; color: #4a4846; font-size: 12px; letter-spacing: -0.02em; }
.zoom { display: flex; align-items: center; }
.zoom span { margin: 0 15px 0 17px; width: 23px; }
.taskbar { height: 41px; flex: none; border-top: 1px solid #000; background: linear-gradient(90deg, #21363f 0%, #20333f 60%, #1c2a3e 80%, #18243c 100%); display: flex; color: #fff; letter-spacing: -0.03em; }
.start { width: 48px; display: flex; align-items: center; justify-content: center; }
.tsearch { width: 288px; background: #f2f2f2; border: 1px solid #b9bcbd; display: flex; align-items: center; gap: 10px; padding-left: 12px; color: #333; font-size: 14.500px; letter-spacing: -0.02em; line-height: 20px; }
.apps { display: flex; width: 588px; }
.app { width: 49.100px; flex: none; display: flex; align-items: center; justify-content: center; position: relative; }
.lg { width: 24px; height: 24px; }
.run::after { content: ""; position: absolute; left: 5px; right: 4px; bottom: 0; height: 2px; background: #76b9ed; }
.half::after { border-right: 8px solid #5788b0; }
.act { background: #4b5964; width: 48px; margin-left: 1px; }
.act::after { left: 0; right: 0; }
.weather { margin-left: 64px; display: flex; align-items: center; gap: 6px; font-size: 14px; }
.weather span { width: 30px; white-space: nowrap; letter-spacing: -0.04em; }
.tray { margin: 12px 0 0 25px; }
.lang { margin: 3px 0 0 6px; width: 30px; text-align: center; line-height: 17px; }
.clock { margin: 3px 0 0 3px; width: 66px; text-align: center; line-height: 17px; white-space: nowrap; letter-spacing: -0.045em; }
.notif { margin: 8px 0 0 10px; position: relative; }
.notif b { position: absolute; left: 13px; top: 9px; font-size: 11px; }
.peek { margin-left: 11px; width: 1px; background: #5f6a78; }
```
